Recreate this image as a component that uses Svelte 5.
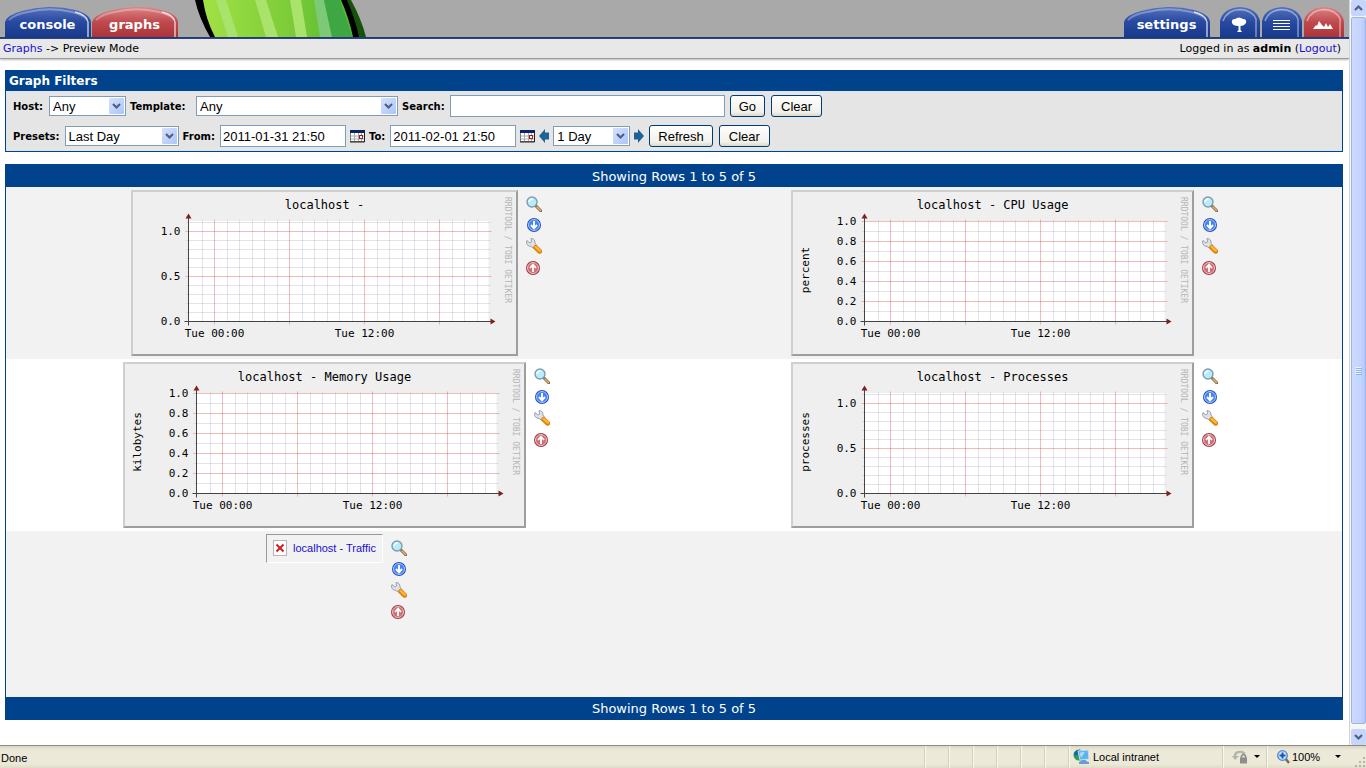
<script lang="ts">
    let host = $state('Any');
    let template = $state('Any');
    let search = $state('');
    let preset = $state('Last Day');
    let from = $state('2011-01-31 21:50');
    let to = $state('2011-02-01 21:50');
    let span = $state('1 Day');

    const fifths = ['0.0', '0.2', '0.4', '0.6', '0.8', '1.0'];
    const halves = ['0.0', '0.5', '1.0'];

    // step = pixels between two labelled lines, sub = minor lines per label
    const rows = [
        [
            { title: 'localhost -', unit: '', labels: halves, step: 45, sub: 5, missing: false },
            { title: 'localhost - CPU Usage', unit: 'percent', labels: fifths, step: 20, sub: 2, missing: false }
        ],
        [
            { title: 'localhost - Memory Usage', unit: 'kilobytes', labels: fifths, step: 20, sub: 2, missing: false },
            { title: 'localhost - Processes', unit: 'processes', labels: halves, step: 45, sub: 5, missing: false }
        ],
        [
            { title: 'localhost - Traffic', unit: '', labels: halves, step: 45, sub: 5, missing: true }
        ]
    ];

    const panes = [1, 2, 3, 4, 5, 6];
    const majors = [26, 101, 176, 251];
    const hours = Array.from({ length: 23 }, (_, i) => 14 + Math.floor(i * 12.5)).filter((x) => !majors.includes(x));

    // lines that carry a label are drawn as majors, so leave them out here
    function minorLines(step: number, sub: number) {
        const gap = step / sub;
        return Array.from({ length: Math.floor(100 / gap) }, (_, i) => (i + 1) * gap).filter((y) => y % step);
    }

    function clearSearch() {
        host = 'Any';
        template = 'Any';
        search = '';
    }

    function clearSpan() {
        preset = 'Last Day';
        span = '1 Day';
    }
</script>

{#snippet wideTab(label, color)}
    <a class="tab" href="#{label}">
        <svg viewBox="0 0 87 30" width="87" height="30" aria-hidden="true">
            <path d="M0 30V15Q2 8 17 4Q43 -3.500 70 3Q85 7 86 15V30Z" fill="url(#{color})" />
            <path d="M4 13Q10 7 23 5Q45 -.5 67 5Q79 8 82 13" fill="none" stroke="#fff" stroke-opacity=".3" stroke-width="2" />
            <path d="M70 5Q82 8 83 15V30" fill="none" stroke="#fff" stroke-opacity=".75" stroke-width="1.4" />
        </svg>
        <span>{label}</span>
    </a>
{/snippet}

{#snippet smallTab(name, color)}
    <a class="tab" href="#{name}" aria-label="{name} view">
        <svg viewBox="0 0 40 30" width="40" height="30" aria-hidden="true">
            <path d="M0 30V14Q3 1 20 0Q37 1 40 14V30Z" fill="url(#{color})" />
            <path d="M3 14Q7 3 20 2.500Q32 3 36 12V30" fill="none" stroke="#fff" stroke-opacity=".45" stroke-width="1.500" />
            {#if name == 'tree'}
                <path d="M12 16Q11 12 15 12Q19 9 23 12Q27 12 26 16Q24 19 20.500 19L20.500 23L22 25H17L18.500 23V19Q13 19 12 16Z" fill="#fff" />
            {:else if name == 'list'}
                <path d="M11 13.500H28M11 16.500H28M11 19.500H28M11 22.500H28" stroke="#fff" fill="none" />
            {:else}
                <path d="M9 22L12 18L13 19L15 14L18 18L20 20L22 16L24 20L26 17L29 22Z" fill="#fff" />
            {/if}
        </svg>
    </a>
{/snippet}

{#snippet chevron()}
    <svg class="drop" viewBox="0 0 15 16" width="15" height="16" aria-hidden="true">
        <rect width="15" height="16" rx="1" fill="url(#xp)" />
        <path d="M4 6L7.500 9.500L11 6" fill="none" stroke="#4d6185" stroke-width="2.200" />
    </svg>
{/snippet}

{#snippet calendar(name)}
    <button class="bare" type="button" aria-label={name}>
        <svg viewBox="0 0 15 14" width="15" height="14">
            <rect x=".5" y="1.500" width="14" height="11" fill="#fff" stroke="#777" />
            <path d="M0 1H15V4H0Z" fill="#0a246a" />
            <path d="M1 7H14M1 10H14M4.500 4V12M8.500 4V12M11.500 4V12" stroke="#aaa" />
            <path d="M14.500 1V13H0" fill="none" stroke="#222" />
            <rect x="9.500" y="6.500" width="3" height="3" fill="#fff" stroke="#a02020" />
        </svg>
    </button>
{/snippet}

{#snippet plot(g)}
    {@const w = g.unit ? 399 : 383}
    {@const x0 = g.unit ? 71.5 : 55.5}
    <svg class="plot" viewBox="0 0 {w} 162" width={w} height="162" role="img" aria-label={g.title}>
        <rect width={w} height="162" fill="#efefef" />
        <rect x={x0} y="29" width="300" height="100" fill="#fff" />
        <text class="title" x={w / 2} y="17">{g.title}</text>
        <g transform="translate({x0} 129.5)">
            {#each minorLines(g.step, g.sub) as y}
                <path class="minor" d="M-2 {-y}H302" />
            {/each}
            {#each hours as x}
                <path class="minor" d="M{x} 0V-101" />
            {/each}
            {#each majors as x}
                <path class="major" d="M{x} 3V-102" />
            {/each}
            {#each g.labels as label, i}
                {#if i}
                    <path class="major" d="M-3 {-i * g.step}H303" />
                {/if}
                <text class="tick" x="-8" y={3 - i * g.step} text-anchor="end">{label}</text>
            {/each}
            <path d="M-4 0H303M0 4V-104" stroke="#444" />
            <path d="M0 -108L3 -103H-3ZM307 0L302 -3V3Z" fill="#7f1f1f" />
            <text class="tick" x="26" y="15" text-anchor="middle">Tue 00:00</text>
            <text class="tick" x="176" y="15" text-anchor="middle">Tue 12:00</text>
        </g>
        {#if g.unit}
            <text class="unit" transform="translate(16 78) rotate(-90)">{g.unit}</text>
        {/if}
        <text class="mark" transform="translate({w - 11} 5) rotate(90)">RRDTOOL / TOBI OETIKER</text>
    </svg>
{/snippet}

{#snippet actions()}
    <div class="actions">
        <a href="#zoom" aria-label="Zoom Graph">
            <svg viewBox="0 0 16 16" width="16" height="16">
                <path d="M9.500 9.500L15 15" stroke="#8a6a48" stroke-width="3" stroke-linecap="round" />
                <path d="M11 11L14.500 14.500" stroke="#e6b878" stroke-width="1.200" stroke-linecap="round" />
                <circle cx="6" cy="6" r="5" fill="#b9ecf9" stroke="#7d9cb5" stroke-width="1.400" />
                <path d="M3 6Q3.500 3 6.500 3" fill="none" stroke="#fff" stroke-width="1.500" />
            </svg>
        </a>
        <a href="#csv" aria-label="CSV Export">
            <svg viewBox="0 0 16 16" width="16" height="16">
                <circle cx="8" cy="8" r="7" fill="#2450bd" />
                <circle cx="8" cy="8" r="5.500" fill="#4484ee" stroke="#a9c8ff" />
                <path d="M8 4V11M5 8L8 11.300L11 8" fill="none" stroke="#fff" stroke-width="1.900" />
            </svg>
        </a>
        <a href="#properties" aria-label="Graph Source and Properties">
            <svg viewBox="0 0 16 16" width="16" height="16">
                <path d="M1 2.500L4 5L5.500 4L5 .5Q9 .5 9 5L11 8L8 10.500L5 8.500Q.5 8 .5 4Z" fill="#dde1e8" stroke="#9299a6" stroke-width=".9" />
                <path d="M9.700 9.500L13.600 13.200" stroke="#dc8410" stroke-width="5" stroke-linecap="round" />
                <path d="M9.700 8.900L13.800 12.600" stroke="#ffb43a" stroke-width="2.400" stroke-linecap="round" />
            </svg>
        </a>
        <a href="#top" aria-label="Page Top">
            <svg viewBox="0 0 16 16" width="16" height="16">
                <circle cx="7" cy="9" r="7" fill="#9b3b42" />
                <circle cx="7" cy="9" r="5.500" fill="#cf7078" stroke="#efc4c6" />
                <path d="M7 13V6M4 9L7 5.700L10 9" fill="none" stroke="#fff" stroke-width="1.800" />
            </svg>
        </a>
    </div>
{/snippet}

<svg class="defs" width="0" height="0" aria-hidden="true">
    <defs>
        <linearGradient id="blue" x1="0" y1="0" x2="0" y2="1">
            <stop offset="0" stop-color="#5573bd" />
            <stop offset=".5" stop-color="#2849a0" />
            <stop offset="1" stop-color="#173a8c" />
        </linearGradient>
        <linearGradient id="red" x1="0" y1="0" x2="0" y2="1">
            <stop offset="0" stop-color="#dc8588" />
            <stop offset=".5" stop-color="#bf4a4e" />
            <stop offset="1" stop-color="#ad3439" />
        </linearGradient>
        <linearGradient id="xp" x1="0" y1="0" x2="1" y2="1">
            <stop offset="0" stop-color="#d5e1fd" />
            <stop offset="1" stop-color="#aec5f7" />
        </linearGradient>
        <linearGradient id="leaf" x1="0" y1="0" x2="1" y2="0">
            <stop offset="0" stop-color="#a2e245" />
            <stop offset=".6" stop-color="#7acb38" />
            <stop offset="1" stop-color="#4fb62f" />
        </linearGradient>
    </defs>
</svg>

<div class="window">
    <div class="view">
        <div class="page">
            <header>
                <nav class="left">
                    {@render wideTab('console', 'blue')}
                    {@render wideTab('graphs', 'red')}
                </nav>
                <svg class="cactus" viewBox="0 0 172 37" width="172" height="37" aria-hidden="true">
                    <path d="M147 0H156Q166 18 171 37H160Z" fill="#17520d" />
                    <path d="M6 0H149L160 37H18Q9 20 6 0Z" fill="url(#leaf)" />
                    <path d="M21 0H31L43 37H33ZM60 0H71L83 37H71ZM95 0H106L112 37H101Z" fill="#a9e36c" />
                    <path d="M119 0H129L137 37H125Z" fill="#7cc977" />
                    <path d="M129 0H145L157 37H137Z" fill="#3fa644" />
                    <path d="M0 0H8Q11 20 20 37H15Q4 18 0 0ZM146 0H152Q160 18 164 37H158Q154 18 146 0Z" fill="#000" />
                </svg>
                <nav class="right">
                    {@render wideTab('settings', 'blue')}
                    <div class="modes">
                        {@render smallTab('tree', 'blue')}
                        {@render smallTab('list', 'blue')}
                        {@render smallTab('preview', 'red')}
                    </div>
                </nav>
            </header>

            <div class="crumbs">
                <span><a href="#graphs">Graphs</a> -&gt; Preview Mode</span>
                <span>Logged in as <b>admin</b> (<a href="#logout">Logout</a>)</span>
            </div>

            <main>
                <form class="filters" onsubmit={(e) => e.preventDefault()}>
                    <h2>Graph Filters</h2>
                    <div class="fields">
                        <div class="line">
                            <label class="host" for="host">Host:</label>
                            <span class="select short">
                                <select id="host" bind:value={host}><option>Any</option></select>
                                {@render chevron()}
                            </span>
                            <label class="template" for="template">Template:</label>
                            <span class="select long">
                                <select id="template" bind:value={template}><option>Any</option></select>
                                {@render chevron()}
                            </span>
                            <label for="search">Search:</label>
                            <input class="search" id="search" type="text" bind:value={search} />
                            <button class="push">Go</button>
                            <button class="push" type="button" onclick={clearSearch}>Clear</button>
                        </div>
                        <div class="line">
                            <label for="preset">Presets:</label>
                            <span class="select medium">
                                <select id="preset" bind:value={preset}><option>Last Day</option></select>
                                {@render chevron()}
                            </span>
                            <label for="from">From:</label>
                            <input id="from" type="text" bind:value={from} />
                            {@render calendar('Start date')}
                            <label for="to">To:</label>
                            <input id="to" type="text" bind:value={to} />
                            {@render calendar('End date')}
                            <button class="bare" type="button" aria-label="Shift back">
                                <svg viewBox="0 0 10 14" width="10" height="14"><path d="M0 7L6 0V3.500H10V10.500H6V14Z" fill="#1f6396" /></svg>
                            </button>
                            <span class="select short">
                                <select aria-label="Time span" bind:value={span}><option>1 Day</option></select>
                                {@render chevron()}
                            </span>
                            <button class="bare" type="button" aria-label="Shift forward">
                                <svg viewBox="0 0 10 14" width="10" height="14"><path d="M10 7L4 0V3.500H0V10.500H4V14Z" fill="#1f6396" /></svg>
                            </button>
                            <button class="push">Refresh</button>
                            <button class="push" type="button" onclick={clearSpan}>Clear</button>
                        </div>
                    </div>
                </form>

                <section class="graphs">
                    <div class="count">Showing Rows 1 to 5 of 5</div>
                    {#each rows as row}
                        <div class="row">
                            {#each row as g}
                                <div class="cell">
                                    {#if g.missing}
                                        <a class="missing" href="#graph">
                                            <svg viewBox="0 0 14 16" width="14" height="16" aria-hidden="true">
                                                <rect x=".5" y=".5" width="13" height="15" fill="#fff" stroke="#b5b5b5" />
                                                <path d="M3.500 4.500L10.500 11.500M10.500 4.500L3.500 11.500" stroke="#d22020" stroke-width="2" />
                                            </svg>
                                            {g.title}
                                        </a>
                                    {:else}
                                        <a class="frame" href="#graph">{@render plot(g)}</a>
                                    {/if}
                                    {@render actions()}
                                </div>
                            {/each}
                        </div>
                    {/each}
                    <div class="count">Showing Rows 1 to 5 of 5</div>
                </section>
            </main>
        </div>

        <div class="scroll">
            <button class="step" aria-label="Scroll up">
                <svg viewBox="0 0 15 16" width="15" height="16"><path d="M4 10L7.500 6.500L11 10" fill="none" stroke="#4d6185" stroke-width="2.200" /></svg>
            </button>
            <div class="thumb">
                <svg viewBox="0 0 7 8" width="7" height="8" aria-hidden="true">
                    <path d="M0 .5H6M0 2.500H6M0 4.500H6M0 6.500H6" stroke="#eef4fe" />
                    <path d="M1 1.500H7M1 3.500H7M1 5.500H7M1 7.500H7" stroke="#8cb0f8" />
                </svg>
            </div>
            <button class="step" aria-label="Scroll down">
                <svg viewBox="0 0 15 16" width="15" height="16"><path d="M4 6L7.500 9.500L11 6" fill="none" stroke="#4d6185" stroke-width="2.200" /></svg>
            </button>
        </div>
    </div>

    <footer>
        <span class="done">Done</span>
        {#each panes as pane (pane)}
            <span class="pane"></span>
        {/each}
        <span class="pane zone">
            <svg viewBox="0 0 17 16" width="17" height="16" aria-hidden="true">
                <circle cx="6" cy="6" r="5.500" fill="#2e9a57" />
                <path d="M1 4Q4 0 8 1L6 5L2 7Z" fill="#1763b5" />
                <path d="M5 2L15 1L16 10L7 11Z" fill="#5bb2f0" stroke="#c6dcf2" />
                <path d="M6.500 3.500L12 3L8 9Z" fill="#a9dcfb" />
                <path d="M9 11H13V12L16 13V15H6V13Z" fill="#6d9bd2" />
            </svg>
            Local intranet
        </span>
        <span class="pane lock">
            <svg viewBox="0 0 17 16" width="17" height="16" aria-hidden="true">
                <path d="M3 9Q2 2 10 3L13 5" fill="none" stroke="#b5b5ac" stroke-width="2.500" />
                <path d="M0 7H7L3 11Z" fill="#b5b5ac" />
                <path d="M9.500 9V7Q11.500 4 13.500 7V9" fill="none" stroke="#888" stroke-width="1.500" />
                <rect x="8" y="8.500" width="7" height="6" fill="#8d8d8d" />
            </svg>
            <svg viewBox="0 0 6 4" width="6" height="4" aria-hidden="true"><path d="M0 0H6L3 3Z" /></svg>
        </span>
        <span class="pane zoom">
            <svg viewBox="0 0 13 14" width="13" height="14" aria-hidden="true">
                <path d="M8 8L12 13" stroke="#8a6540" stroke-width="2.500" />
                <circle cx="5.500" cy="5.500" r="4.800" fill="#cfe6fd" stroke="#4c86d0" stroke-width="1.300" />
                <path d="M5.500 2.500V8.500M2.500 5.500H8.500" stroke="#1b55b8" stroke-width="2" />
            </svg>
            100%
            <svg class="more" viewBox="0 0 6 4" width="6" height="4" aria-hidden="true"><path d="M0 0H6L3 3Z" /></svg>
        </span>
        <svg class="grip" viewBox="0 0 12 12" width="12" height="12" aria-hidden="true">
            <path d="M9 1h2v2h-2zM5 5h2v2h-2zM9 5h2v2h-2zM1 9h2v2h-2zM5 9h2v2h-2zM9 9h2v2h-2z" fill="#b8b4a2" />
        </svg>
    </footer>
</div>

<style>
    :global(body) {
        margin: 0;
        background: #fff;
    }
    .defs {
        position: absolute;
    }
    .window {
        min-height: 100vh;
        display: flex;
        flex-direction: column;
        font-family: Verdana, "DejaVu Sans", sans-serif;
        font-size: 11px;
        color: #000;
    }
    .window svg {
        display: block;
        flex: none;
    }
    .view {
        flex: 1;
        display: flex;
    }
    .page {
        flex: 1;
        min-width: 0;
    }
    a {
        color: #1a0fd0;
        text-decoration: none;
    }
    header {
        display: flex;
        align-items: flex-end;
        height: 37px;
        padding: 0 5px;
        background: #a9a9a9;
        border-bottom: 2px solid #233a7a;
    }
    .left,
    .right,
    .modes {
        display: flex;
    }
    .modes {
        gap: 2px;
    }
    .right {
        gap: 9px;
        margin-left: auto;
    }
    .cactus {
        margin-left: 16px;
    }
    .tab {
        display: grid;
    }
    .tab svg,
    .tab span {
        grid-area: 1 / 1;
    }
    .tab span {
        place-self: center;
        padding: 4px 2px 0 0;
        font-size: 13px;
        font-weight: bold;
        color: #fff;
    }
    .crumbs {
        display: flex;
        justify-content: space-between;
        padding: 1px 8px 0 3px;
        line-height: 18px;
        background: #e8e8e8;
        border-bottom: 1px solid #9a9a9a;
        box-shadow: 0 1px 2px #bbb;
    }
    main {
        padding: 11px 6px 0 5px;
    }
    .filters {
        margin-bottom: 12px;
        background: #e5e5e5;
        border: 1px solid #00438c;
    }
    h2 {
        margin: 0;
        padding: 1px 3px 0;
        font-size: 12px;
        line-height: 19px;
        color: #fff;
        background: #00438c;
    }
    .fields {
        display: flex;
        flex-direction: column;
        gap: 8px;
        padding: 3px 6px;
        border: 1px solid #dce6f0;
    }
    .line {
        display: flex;
        align-items: center;
        gap: 4px;
        height: 22px;
    }
    label {
        padding-right: 1px;
        font-size: 10px;
        font-weight: bold;
    }
    .host {
        width: 31px;
    }
    .template {
        width: 61px;
    }
    .select {
        display: grid;
        align-items: center;
    }
    .short {
        width: 77px;
    }
    .medium {
        width: 114px;
    }
    .long {
        width: 202px;
    }
    select,
    input,
    .push {
        box-sizing: border-box;
        margin: 0;
        font-family: "Liberation Sans", Arial, sans-serif;
        font-size: 13px;
        color: #000;
        background: #fff;
        border: 1px solid #7f9db9;
        border-radius: 0;
    }
    select {
        grid-area: 1 / 1;
        width: 100%;
        height: 20px;
        padding: 0 3px;
        appearance: none;
    }
    .drop {
        grid-area: 1 / 1;
        justify-self: end;
        margin-right: 2px;
        pointer-events: none;
    }
    input {
        width: 126px;
        height: 22px;
        padding: 0 2px;
    }
    .search {
        width: 275px;
    }
    .push {
        height: 22px;
        margin-left: 1px;
        padding: 0 8px;
        background: linear-gradient(#fff, #f1f0ea 80%, #dcd8cc);
        border-color: #003c74;
        border-radius: 3px;
    }
    .push + .push {
        margin-left: 2px;
        padding: 0 9px;
    }
    .bare {
        padding: 0;
        background: none;
        border: 0;
    }
    .graphs {
        border: 1px solid #00438c;
    }
    .count {
        padding-top: 1px;
        font-size: 13px;
        line-height: 21px;
        text-align: center;
        color: #fff;
        background: #00438c;
    }
    .row {
        display: grid;
        grid-template-columns: 1fr 1fr;
        min-height: 166px;
        background: #f2f2f2;
    }
    .row:nth-child(odd) {
        background: #fff;
    }
    .cell {
        display: flex;
        justify-content: center;
        align-items: flex-start;
        gap: 8px;
        padding: 3px 7px 3px 0;
    }
    .frame {
        border: 2px solid;
        border-color: #cfcfcf #9e9e9e #9e9e9e #cfcfcf;
    }
    .plot text {
        font-family: "DejaVu Sans Mono", monospace;
        fill: #000;
    }
    .plot .title {
        font-size: 12px;
        text-anchor: middle;
    }
    .plot .unit {
        font-size: 11px;
        text-anchor: middle;
    }
    .plot .tick {
        font-size: 11px;
    }
    .plot .mark {
        font-size: 8px;
        fill: #b5b5b5;
    }
    .minor {
        stroke: #8c8ca0;
        stroke-opacity: 0.25;
    }
    .major {
        stroke: #d23c3c;
        stroke-opacity: 0.35;
    }
    .actions {
        display: flex;
        flex-direction: column;
        gap: 5px;
        padding-top: 6px;
    }
    .missing {
        display: flex;
        align-items: center;
        gap: 6px;
        padding: 5px 6px 6px;
        font-family: "Liberation Sans", Arial, sans-serif;
        font-size: 11px;
        border: 1px solid;
        border-color: #999 #fff #fff #999;
    }
    .scroll {
        display: flex;
        flex-direction: column;
        align-items: center;
        box-sizing: border-box;
        width: 17px;
        background: #f6f6f2;
        border-left: 1px solid #d5d5cd;
    }
    .step {
        padding: 0;
        background: #c5d5fc;
        border: 0;
        border-radius: 2px;
    }
    .thumb {
        flex: 1;
        display: grid;
        place-items: center;
        box-sizing: border-box;
        width: 15px;
        margin: 1px 0 5px;
        background: linear-gradient(90deg, #cbdafd, #c3d3fd 70%, #b3c8f8);
        border: 1px solid #9db5ea;
        border-radius: 2px;
    }
    footer {
        display: flex;
        align-items: stretch;
        height: 22px;
        font-family: "Liberation Sans", Tahoma, sans-serif;
        font-size: 11px;
        line-height: 24px;
        background: linear-gradient(#d8d5c5, #ece9d8 4px, #ece9d8 18px, #dfdbc8);
        border-top: 1px solid #8f8d82;
    }
    .done {
        flex: 1;
        padding-left: 1px;
    }
    .pane {
        display: flex;
        align-items: center;
        box-sizing: border-box;
        width: 24px;
        border-left: 1px solid #d3d0bf;
        box-shadow: inset 1px 0 #f8f7f0;
    }
    .zone {
        width: 154px;
        gap: 3px;
        padding-left: 4px;
    }
    .lock {
        width: 44px;
        gap: 5px;
        padding-left: 9px;
    }
    .zoom {
        width: 88px;
        gap: 2px;
        padding-left: 10px;
    }
    .more {
        margin-left: 13px;
    }
    .grip {
        align-self: flex-end;
    }
</style>
